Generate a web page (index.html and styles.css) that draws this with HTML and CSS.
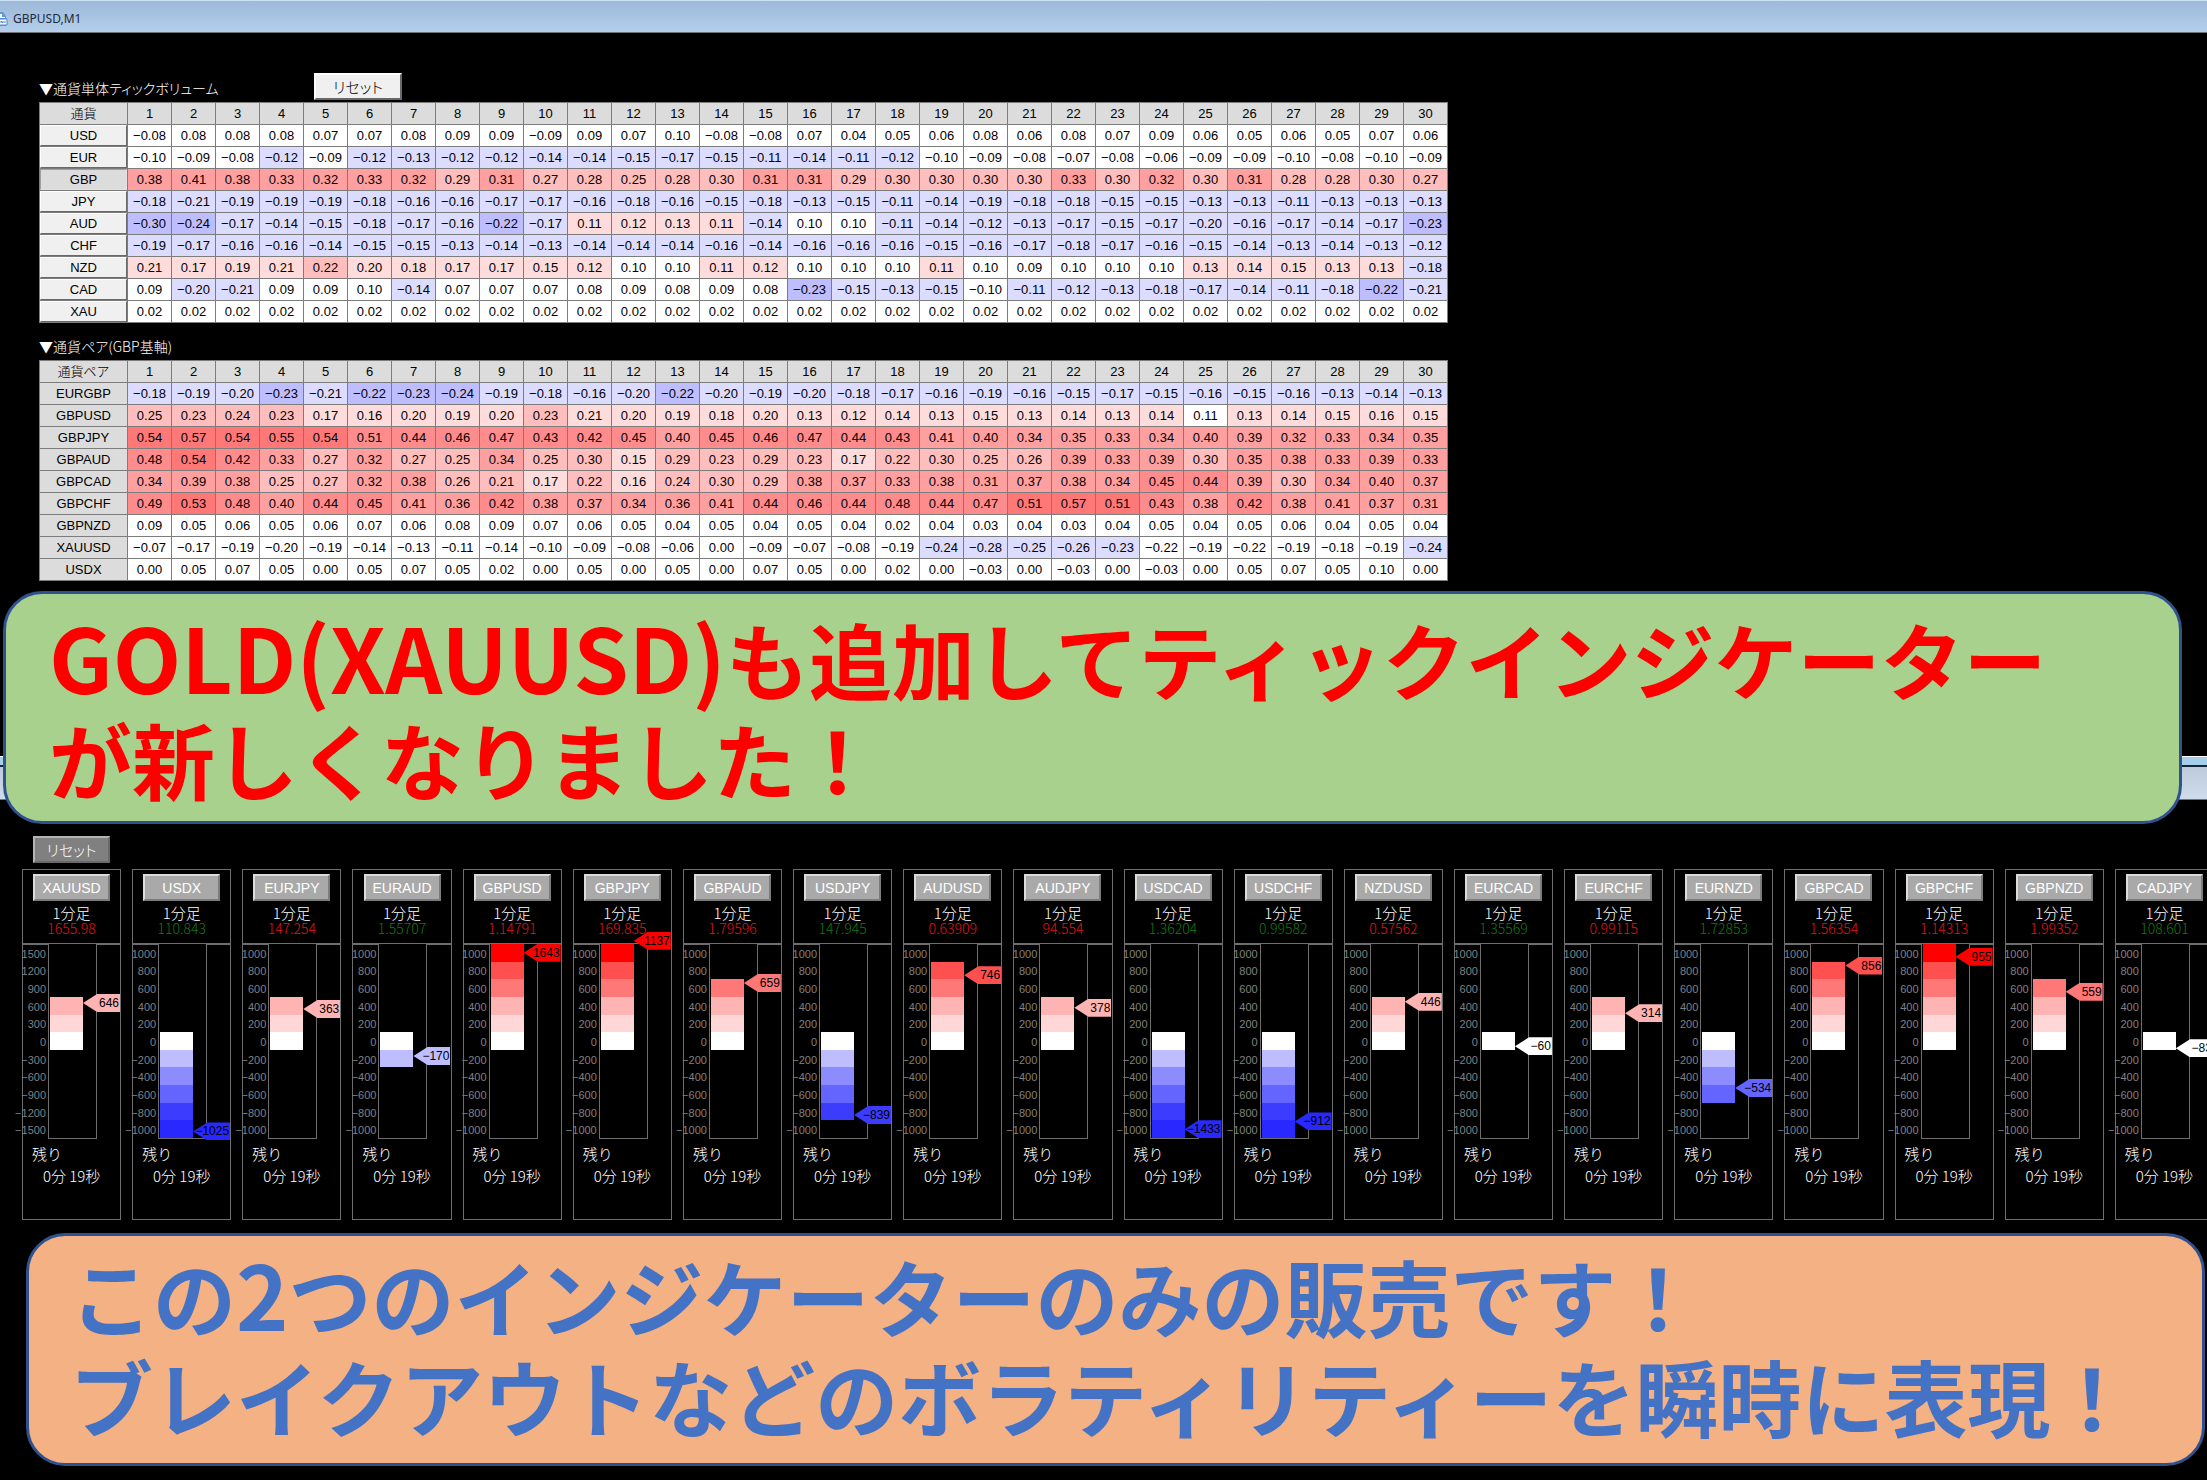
FILE: index.html
```html
<!DOCTYPE html>
<html lang="ja">
<head>
    <meta charset="UTF-8">
    <meta name="viewport" content="width=device-width, initial-scale=1.0">
    <title>GBPUSD,M1</title>
    <link rel="stylesheet" href="styles.css">
</head>
<body>
    <section class="window">
        <header class="titlebar">
            <svg class="titlebar-icon" width="16" height="16" viewBox="0 0 16 16">
                <path d="M2 1h9l3 4v10H2z" fill="#5b9be0"/>
                <path d="M4 3h6v3h3v1H4z" fill="#fff"/>
                <path d="M3 8h12v6H3z" fill="#fff" stroke="#4a86cf"/>
                <path d="M5 12v-2h2v2M9 12v-2l2 2v-2M13 10v2" fill="none" stroke="#4a86cf"/>
            </svg>
            <span>GBPUSD,M1</span>
        </header>
        <div class="chart">
            <div class="heading">
                <h2>▼通貨単体ティックボリューム</h2>
                <button class="btn-reset" type="button">リセット</button>
            </div>
            <table class="ticks" id="currencies"></table>
            <h2 class="heading-pairs">▼通貨ペア(GBP基軸)</h2>
            <table class="ticks" id="pairs"></table>
        </div>
    </section>

    <div class="banner banner-green">
        <span class="latin">GOLD(XAUUSD)</span>も追加してティックインジケーター<br>が新しくなりました！
    </div>

    <section class="window window-lower">
        <div class="frame"></div>
        <div class="meters">
            <button class="btn-dark" type="button">リセット</button>
            <div class="panels" id="panels"></div>
        </div>
    </section>

    <div class="banner banner-orange">
        この<span class="latin">2</span>つのインジケーターのみの販売です！<br>ブレイクアウトなどのボラティリティーを瞬時に表現！
    </div>

    <script src="script.js"></script>
</body>
</html>
```
FILE: styles.css
```css
* {
    box-sizing: border-box;
}

body {
    margin: 0;
    background: #000;
    color: #fff;
    font-family: 'Liberation Sans', 'Noto Sans CJK JP', sans-serif;
    font-size: 15px;
    overflow-x: hidden;
}

button {
    font-family: inherit;
    font-size: 15px;
    padding: 0;
    cursor: pointer;
}

h2 {
    margin: 0;
    font-family: 'Noto Sans CJK JP', sans-serif;
    font-size: 14px;
    font-weight: 300;
    line-height: 20px;
    font-feature-settings: 'palt';
}

/* ウィンドウ */
.window {
    overflow: hidden;
}

.titlebar {
    display: flex;
    align-items: center;
    gap: 5px;
    height: 33px;
    padding-top: 4px;
    border-top: 1px solid #c9e0f5;
    border-bottom: 1px solid #6f7377;
    background: linear-gradient(#9db8d8, #b4cfeb);
    color: #1c2a3a;
    font-family: 'Noto Sans', sans-serif;
    font-size: 12px;
}

.titlebar-icon {
    margin-left: -8px;
}

.chart {
    padding: 40px 39px 0;
}

.heading {
    display: flex;
    align-items: center;
    height: 27px;
    margin-bottom: 2px;
}

.heading h2 {
    width: 275px;
    padding-top: 3px;
}

.heading-pairs {
    margin: 13px 0 4px;
}

.btn-reset {
    width: 88px;
    height: 27px;
    border: 2px solid;
    border-color: #fff #696969 #696969 #fff;
    background: #f0f0f0;
    color: #000;
    font-weight: 300;
    font-feature-settings: 'palt';
}

/* ティック表 */
.ticks {
    width: 1409px;
    table-layout: fixed;
    border-collapse: collapse;
    background: #fff;
    color: #000;
    font-size: 13px;
    line-height: 20px;
    text-align: center;
}

.ticks .col-name {
    width: 88px;
}

.ticks th,
.ticks td {
    height: 22px;
    padding: 1px 0 0;
    border: 1px solid #7c7c7c;
    white-space: nowrap;
}

.ticks th {
    background: #dcdcdc;
    font-size: 13px;
    font-weight: 300;
}

.ticks th:has(button) {
    padding: 0;
}

.ticks th button {
    display: block;
    width: 100%;
    height: 21px;
    border: 1px solid;
    border-color: #fff #696969 #696969 #fff;
    background: #f0f0f0;
    color: #000;
    font-size: 13px;
}

.ticks th button.on {
    border-color: #a0a0a0 #e3e3e3 #e3e3e3 #a0a0a0;
    background: #dcdcdc;
}

.ticks .up1 { background: #ffdcdc; }
.ticks .up2 { background: #ffbebe; }
.ticks .up3 { background: #ffa0a0; }
.ticks .up4 { background: #ff8c8c; }
.ticks .up5 { background: #ff7878; }
.ticks .down1 { background: #dcdcff; }
.ticks .down2 { background: #bebeff; }

/* 告知バナー */
.banner {
    position: relative;
    z-index: 1;
    height: 233px;
    border: 3px solid #2f528f;
    border-radius: 39px;
    font-family: 'Noto Sans CJK JP', sans-serif;
    font-size: 83px;
    font-weight: 700;
    line-height: 100px;
    white-space: nowrap;
}

.banner .latin {
    font-size: 89px;
    line-height: 80px;
}

.banner-green {
    margin: 10px 25px 0 3px;
    padding: 14px 0 0 43px;
    background: #a9d18e;
    color: #ff0000;
}

.banner-orange {
    margin: 13px 2px 14px 26px;
    padding: 9px 0 0 41px;
    background: #f4b183;
    color: #4472c4;
}

/* 下側ウィンドウはバナーの裏に回り込む */
.window-lower {
    margin-top: -68px;
}

.frame {
    height: 44px;
    border-top: 1px solid #fff;
    border-bottom: 1px solid #6f7377;
    background: linear-gradient(#a6cfec 8px, #16263a 8px, #16263a 10px, #bccadb 10px, #cfdcec);
}

.meters {
    padding: 36px 0 0 22px;
}

.btn-dark,
.panel button {
    display: block;
    width: 77px;
    height: 27px;
    border: 2px solid;
    border-color: #b4b4b4 #6a6a6a #6a6a6a #b4b4b4;
    background: #808080;
    color: #fff;
    font-weight: 300;
    font-feature-settings: 'palt';
}

.btn-dark {
    margin: 0 0 6px 11px;
}

/* 右端のパネルは画面の外に少しはみ出す */
.panels {
    display: grid;
    grid-template-columns: repeat(20, 1fr);
    gap: 11px;
    margin-right: -7px;
}

.panel {
    min-width: 0;
    height: 351px;
    padding-top: 4px;
    border: 1px solid #6e6e6e;
    font-weight: 300;
}

.panel button {
    margin: 0 auto;
    border-color: #dcdcdc #7c7c7c #7c7c7c #dcdcdc;
    background: #a9a9a9;
    font-size: 14px;
}

.period,
.price,
.remain,
.time {
    margin: 0;
    font-family: 'Noto Sans CJK JP', sans-serif;
    text-align: center;
    line-height: 22px;
}

.period {
    padding-top: 1px;
}

.price {
    margin: -4px 0 6px;
    font-size: 14px;
    line-height: 17px;
}

.price.up { color: #e01414; }
.price.down { color: #107a10; }

.remain {
    padding: 4px 0 0 9px;
    text-align: left;
}

.gauge {
    display: grid;
    grid-template-columns: 25px 49px;
    border-top: 2px solid #6e6e6e;
}

.scale {
    display: flex;
    flex-direction: column;
    align-items: flex-end;
    margin: 0;
    padding: 0 2px 0 0;
    list-style: none;
    color: #808080;
    font-size: 11px;
}

.scale li {
    display: flex;
    flex: 1;
    align-items: center;
    margin-left: -20px;
}

.box {
    position: relative;
    display: grid;
    grid-template-rows: repeat(11, 1fr);
    height: 196px;
    margin-top: -2px;
    padding-left: 1px;
    border: 1px solid #6e6e6e;
    background: #000;
}

.box i {
    width: 33px;
}

.tag {
    position: absolute;
    left: 34px;
    width: 37px;
    height: 18px;
    padding-right: 1px;
    transform: translateY(-50%);
    clip-path: polygon(0 50%, 38% 0, 100% 0, 100% 100%, 38% 100%);
    color: #000;
    font-size: 12px;
    line-height: 18px;
    text-align: right;
    white-space: nowrap;
}

.zero { background: #fff; }
.p1 { background: #ffd7d7; }
.p2 { background: #ffb4b4; }
.p3 { background: #ff7878; }
.p4 { background: #ff5050; }
.p5 { background: #ff0000; }
.m1 { background: #bebeff; }
.m2 { background: #8c8cff; }
.m3 { background: #6464ff; }
.m4 { background: #3c3cff; }
.m5 { background: #2828ff; }
```
FILE: script.js
```js
// 値は100倍の整数
const currencies = [
    ['USD', [-8, 8, 8, 8, 7, 7, 8, 9, 9, -9, 9, 7, 10, -8, -8, 7, 4, 5, 6, 8, 6, 8, 7, 9, 6, 5, 6, 5, 7, 6]],
    ['EUR', [-10, -9, -8, -12, -9, -12, -13, -12, -12, -14, -14, -15, -17, -15, -11, -14, -11, -12, -10, -9, -8, -7, -8, -6, -9, -9, -10, -8, -10, -9]],
    ['GBP', [38, 41, 38, 33, 32, 33, 32, 29, 31, 27, 28, 25, 28, 30, 31, 31, 29, 30, 30, 30, 30, 33, 30, 32, 30, 31, 28, 28, 30, 27]],
    ['JPY', [-18, -21, -19, -19, -19, -18, -16, -16, -17, -17, -16, -18, -16, -15, -18, -13, -15, -11, -14, -19, -18, -18, -15, -15, -13, -13, -11, -13, -13, -13]],
    ['AUD', [-30, -24, -17, -14, -15, -18, -17, -16, -22, -17, 11, 12, 13, 11, -14, 10, 10, -11, -14, -12, -13, -17, -15, -17, -20, -16, -17, -14, -17, -23]],
    ['CHF', [-19, -17, -16, -16, -14, -15, -15, -13, -14, -13, -14, -14, -14, -16, -14, -16, -16, -16, -15, -16, -17, -18, -17, -16, -15, -14, -13, -14, -13, -12]],
    ['NZD', [21, 17, 19, 21, 22, 20, 18, 17, 17, 15, 12, 10, 10, 11, 12, 10, 10, 10, 11, 10, 9, 10, 10, 10, 13, 14, 15, 13, 13, -18]],
    ['CAD', [9, -20, -21, 9, 9, 10, -14, 7, 7, 7, 8, 9, 8, 9, 8, -23, -15, -13, -15, -10, -11, -12, -13, -18, -17, -14, -11, -18, -22, -21]],
    ['XAU', Array(30).fill(2)]
];

const pairs = [
    ['EURGBP', [-18, -19, -20, -23, -21, -22, -23, -24, -19, -18, -16, -20, -22, -20, -19, -20, -18, -17, -16, -19, -16, -15, -17, -15, -16, -15, -16, -13, -14, -13]],
    ['GBPUSD', [25, 23, 24, 23, 17, 16, 20, 19, 20, 23, 21, 20, 19, 18, 20, 13, 12, 14, 13, 15, 13, 14, 13, 14, 11, 13, 14, 15, 16, 15], [12, 22, 31, 42, 51]],
    ['GBPJPY', [54, 57, 54, 55, 54, 51, 44, 46, 47, 43, 42, 45, 40, 45, 46, 47, 44, 43, 41, 40, 34, 35, 33, 34, 40, 39, 32, 33, 34, 35], [11, 21, 31, 42, 52]],
    ['GBPAUD', [48, 54, 42, 33, 27, 32, 27, 25, 34, 25, 30, 15, 29, 23, 29, 23, 17, 22, 30, 25, 26, 39, 33, 39, 30, 35, 38, 33, 39, 33]],
    ['GBPCAD', [34, 39, 38, 25, 27, 32, 38, 26, 21, 17, 22, 16, 24, 30, 29, 38, 37, 33, 38, 31, 37, 38, 34, 45, 44, 39, 30, 34, 40, 37], [11, 21, 31, 42, 51]],
    ['GBPCHF', [49, 53, 48, 40, 44, 45, 41, 36, 42, 38, 37, 34, 36, 41, 44, 46, 44, 48, 44, 47, 51, 57, 51, 43, 38, 42, 38, 41, 37, 31]],
    ['GBPNZD', [9, 5, 6, 5, 6, 7, 6, 8, 9, 7, 6, 5, 4, 5, 4, 5, 4, 2, 4, 3, 4, 3, 4, 5, 4, 5, 6, 4, 5, 4]],
    ['XAUUSD', [-7, -17, -19, -20, -19, -14, -13, -11, -14, -10, -9, -8, -6, 0, -9, -7, -8, -19, -24, -28, -25, -26, -23, -22, -19, -22, -19, -18, -19, -24], [23, 40, 60, 80, 99]],
    ['USDX', [0, 5, 7, 5, 0, 5, 7, 5, 2, 0, 5, 0, 5, 0, 7, 5, 0, 2, 0, -3, 0, -3, 0, -3, 0, 5, 7, 5, 10, 0]]
];

const meters = [
    ['XAUUSD', '1655.98', 'up', 646, 300],
    ['USDX', '110.843', 'down', -1025],
    ['EURJPY', '147.254', 'up', 363],
    ['EURAUD', '1.55707', 'down', -170],
    ['GBPUSD', '1.14791', 'up', 1643],
    ['GBPJPY', '169.835', 'up', 1137],
    ['GBPAUD', '1.79596', 'up', 659],
    ['USDJPY', '147.945', 'down', -839],
    ['AUDUSD', '0.63909', 'up', 746],
    ['AUDJPY', '94.554', 'up', 378],
    ['USDCAD', '1.36204', 'down', -1433],
    ['USDCHF', '0.99582', 'down', -912],
    ['NZDUSD', '0.57562', 'up', 446],
    ['EURCAD', '1.35569', 'down', -60],
    ['EURCHF', '0.99115', 'up', 314],
    ['EURNZD', '1.72853', 'down', -534],
    ['GBPCAD', '1.56354', 'up', 856],
    ['GBPCHF', '1.14313', 'up', 955],
    ['GBPNZD', '1.99352', 'up', 559],
    ['CADJPY', '108.601', 'down', -83]
];

function signed(value, digits) {
    return (value < 0 ? '−' : '') + Math.abs(value).toFixed(digits);
}

function cell(value, limits) {
    const level = limits.filter(limit => Math.abs(value) >= limit).length;
    const cls = level ? (value < 0 ? 'down' : 'up') + level : '';
    return `<td class="${cls}">${signed(value / 100, 2)}</td>`;
}

function drawTable(id, title, rows, clickable) {
    let html = `<thead><tr><th class="col-name" scope="col">${title}</th>`;
    for (let i = 1; i <= 30; i++) {
        html += `<th scope="col">${i}</th>`;
    }
    html += '</tr></thead><tbody>';
    rows.forEach(([name, values, limits = [11, 22, 31, 42, 51]]) => {
        const on = name === 'GBP' ? ' class="on"' : '';
        const label = clickable ? `<button type="button"${on}>${name}</button>` : name;
        html += `<tr><th scope="row">${label}</th>${values.map(v => cell(v, limits)).join('')}</tr>`;
    });
    document.getElementById(id).innerHTML = html + '</tbody>';
}

function color(level) {
    return level === 0 ? 'zero' : (level > 0 ? 'p' : 'm') + Math.abs(level);
}

function drawMeter([name, price, dir, value, step = 200]) {
    const level = Math.sign(value) * Math.min(5, Math.round(Math.abs(value) / step));
    let scale = '';
    let bar = '';
    for (let i = 5; i >= -5; i--) {
        const filled = i === 0 || (i > 0 ? i <= level : i >= level);
        scale += `<li>${signed(i * step, 0)}</li>`;
        bar += `<i class="${filled ? color(i) : ''}"></i>`;
    }
    // 目盛りを大きく超えた値は端で止める
    const pos = Math.abs(value) > step * 6 ? Math.sign(value) * 5 : value / step;
    const top = (5.5 - pos) / 11 * 100;
    return `<div class="panel">
        <button type="button">${name}</button>
        <p class="period">1分足</p>
        <p class="price ${dir}">${price}</p>
        <div class="gauge">
            <ul class="scale">${scale}</ul>
            <div class="box">${bar}<span class="tag ${color(level)}" style="top: ${top}%">${signed(value, 0)}</span></div>
        </div>
        <p class="remain">残り</p>
        <p class="time">0分 19秒</p>
    </div>`;
}

drawTable('currencies', '通貨', currencies, true);
drawTable('pairs', '通貨ペア', pairs, false);
document.getElementById('panels').innerHTML = meters.map(drawMeter).join('');
```
